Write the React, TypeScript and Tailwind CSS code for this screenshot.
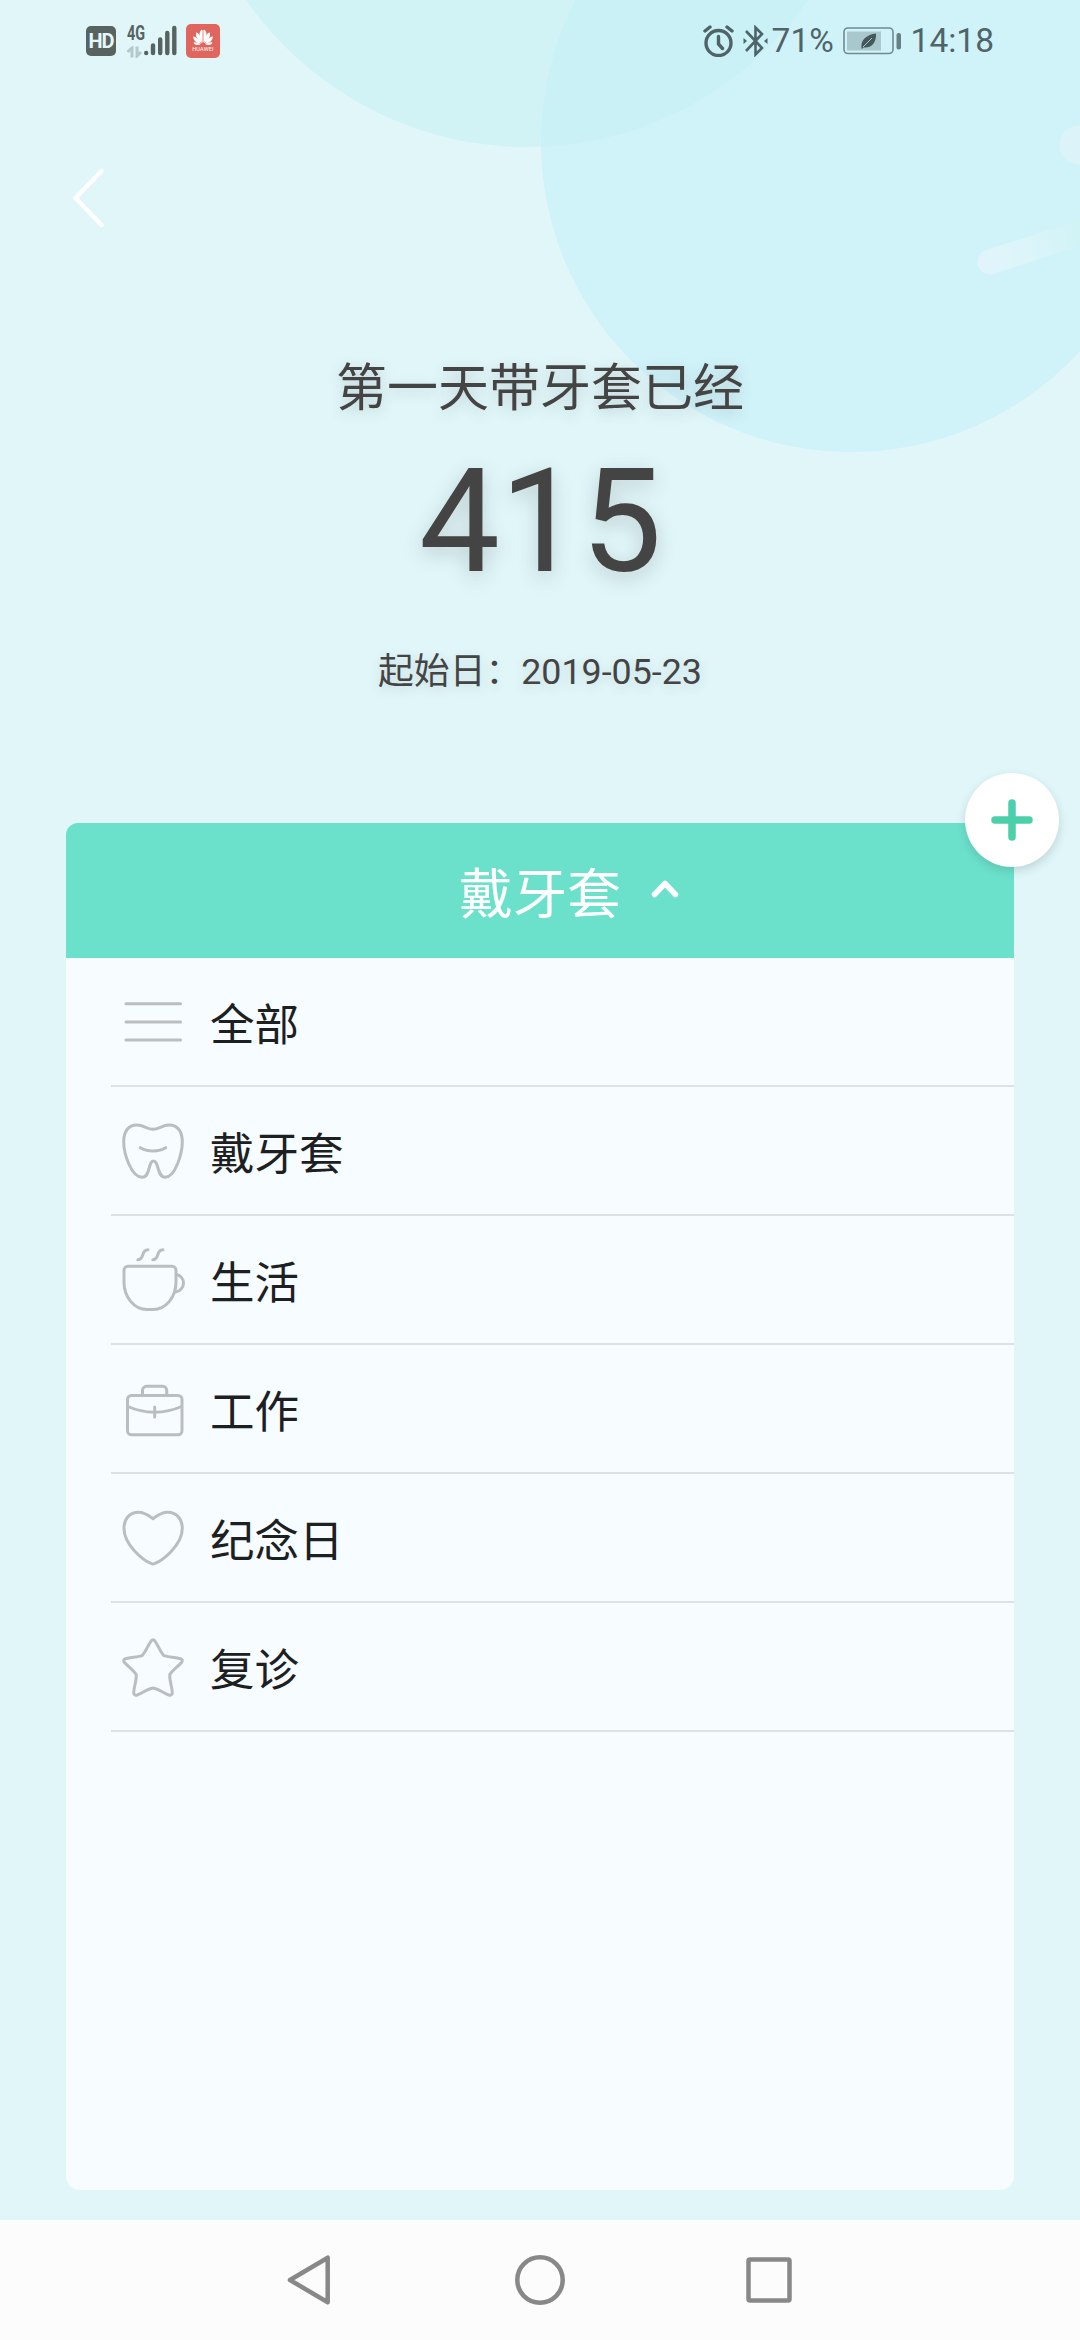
import { useState, type ReactNode } from 'react';

interface Category {
  id: string;
  name: string;
  icon: ReactNode;
}

const categories: Category[] = [
  {
    id: 'all',
    name: '全部',
    icon: <path d="M9 17.7H63.500M9 35.900H63.500M9 54H63.500" />,
  },
  {
    id: 'aligner',
    name: '戴牙套',
    icon: (
      <>
        <path d="M36 14.3C30 14.3 27 10 19.7 10C11.500 10 6.700 16.500 6.700 26.700C6.700 38 14 62.300 25.300 62.300C33.500 62.300 31 46 36.500 46C42 46 40 62.300 48 62.300C58.500 62.300 65.300 38 65.300 26.700C65.300 16.500 60.500 10 52.300 10C45 10 42 14.300 36 14.300Z" />
        <path d="M23.300 32.700C30 37 42 37 48.700 32.700" />
      </>
    ),
  },
  {
    id: 'life',
    name: '生活',
    icon: (
      <>
        <path d="M11 22.300H55A4 4 0 0 1 59 26.300V38C59 53 49 65.500 36 65.500H30C17 65.500 7 53 7 38V26.300A4 4 0 0 1 11 22.300Z" />
        <path d="M59.500 30.500C63.500 31.500 66.500 35 66.500 39C66.500 43.500 63 47.500 58.500 48" />
        <path d="M20.800 15.700C28 15.700 23.500 5.700 31 5.700M35.800 15.700C43 15.700 38.500 5.700 46 5.700" />
      </>
    ),
  },
  {
    id: 'work',
    name: '工作',
    icon: (
      <>
        <rect x="10.500" y="22.500" width="54.500" height="39.300" rx="4" />
        <path d="M25.500 22V17.300A4 4 0 0 1 29.500 13.300H45.700A4 4 0 0 1 49.700 17.300V22" />
        <path d="M11 33.500C27 41 48 41 64.500 33.500M37.700 34V44" />
      </>
    ),
  },
  {
    id: 'anniversary',
    name: '纪念日',
    icon: (
      <path d="M36 16.700C31.500 13.500 27.500 10.300 21.500 10.300C12.500 10.300 7 17 7 26.300C7 43 26 58.500 34.500 61.700Q36 62.300 37.500 61.700C46 58.500 65.300 43 65.300 26.300C65.300 17 59.500 10.300 50.500 10.300C44.500 10.300 40.500 13.500 36 16.700Z" />
    ),
  },
  {
    id: 'revisit',
    name: '复诊',
    icon: (
      <path d="M34.200 9.800Q36 7.600 37.800 9.800C41 14 43 20.500 46.500 24.300C51 26.300 58 26 63.500 27.700Q66.500 28.800 64.500 31.500C61 35.500 55.500 39 52.800 43.500C52.300 49.500 55 55.500 55.300 61.500Q55 65 51.800 64C46.500 62 41.500 58 36 57C30.500 58 25.500 62 20.200 64Q17 65 16.700 61.500C17 55.500 19.700 49.500 19.200 43.500C16.500 39 11 35.500 7.500 31.500Q5.500 28.800 8.500 27.700C14 26 21 26.300 25.500 24.300C29 20.500 31 14 34.200 9.800Z" />
    ),
  },
];

function Backdrop() {
  return (
    <svg className="absolute top-0 left-0 w-[1080px] h-[480px]" viewBox="0 0 1080 480">
      <defs>
        <linearGradient id="streak" gradientUnits="userSpaceOnUse" x1="990" y1="262" x2="1080" y2="233">
          <stop offset="0" stopColor="#e0f5fb" />
          <stop offset="0.4" stopColor="#dcf5f9" />
          <stop offset="1" stopColor="#d0f3f6" />
        </linearGradient>
      </defs>
      <circle cx="527" cy="-195" r="342" fill="#d2f3f5" />
      <circle cx="851" cy="142" r="310" fill="#d0f2f9" />
      <clipPath id="overlap">
        <circle cx="851" cy="142" r="310" />
      </clipPath>
      <circle cx="527" cy="-195" r="342" fill="#caf1f6" clipPath="url(#overlap)" />
      <path d="M990 262L1095 228" stroke="url(#streak)" strokeWidth="25" strokeLinecap="round" />
      <circle cx="1079" cy="145" r="19.500" fill="#dcf4f9" />
    </svg>
  );
}

function StatusBar() {
  return (
    <div className="relative flex h-[82px] items-center pl-[86px] pr-[86px] text-[#4f6469]">
      <div className="flex h-[30px] w-[30px] items-center justify-center rounded-[5px] bg-[#566361] text-[20px] font-bold leading-none tracking-[-1px] text-[#e6f7f9]">
        HD
      </div>
      <div className="ml-[11px] flex h-[34px] w-[16px] flex-col justify-between">
        <span className="origin-left scale-x-[0.72] text-[20px] font-bold leading-[18px] text-[#566361]">4G</span>
        <svg className="h-[12px] w-[15px]" viewBox="0 0 15 12" fill="none" stroke="#b5c9cc" strokeWidth="3">
          <path d="M5 11.500V2L0.500 6M10 0.500V10L14 6" />
        </svg>
      </div>
      <svg className="ml-[1px] h-[34px] w-[34px]" viewBox="0 0 34 34" stroke="#566361" strokeWidth="4.400" strokeLinecap="round">
        <path d="M2.200 29V29.100M9 21.500V29M16.200 15.500V29M23.300 9V29M30.300 4V29" />
      </svg>
      <div className="ml-[8px] flex h-[34px] w-[34px] flex-col items-center rounded-[5px] bg-[#e0655e] pt-[5px]">
        <svg className="h-[17px] w-[22px]" viewBox="0 0 22 17" fill="#fff">
          <path d="M10.600 14C7 9 6.500 3 9.500 0.800Q10.600 0.500 10.600 2Z" />
          <path d="M11.400 14C15 9 15.500 3 12.500 0.800Q11.400 0.500 11.400 2Z" />
          <path d="M9.800 14.300C5 11 3 6.500 4.500 3.200C7.500 4.500 9.500 9 9.800 14.300Z" />
          <path d="M12.200 14.300C17 11 19 6.500 17.500 3.200C14.500 4.500 12.500 9 12.200 14.300Z" />
          <path d="M9 14.800C4 14 1 11 1.200 7.200C4.500 8.200 7.500 11 9 14.800Z" />
          <path d="M13 14.800C18 14 21 11 20.800 7.200C17.500 8.200 14.500 11 13 14.800Z" />
          <path d="M8.500 15.500C5 16.500 2.500 16 1.500 13.500C4 13 6.500 14 8.500 15.500Z" />
          <path d="M13.500 15.500C17 16.500 19.500 16 20.500 13.500C18 13 15.500 14 13.500 15.500Z" />
        </svg>
        <span className="text-[5.500px] leading-[7px] tracking-[0.2px] text-white">HUAWEI</span>
      </div>

      <svg className="ml-auto h-[32px] w-[31px]" viewBox="0 0 31 32" fill="none" stroke="currentColor" strokeWidth="3.400" strokeLinecap="round">
        <circle cx="15.500" cy="18" r="12.500" />
        <path d="M15.500 11.500V19L19.500 23.500M2 6L7 2M29 6L24 2" />
      </svg>
      <svg className="ml-[9px] h-[32px] w-[25px]" viewBox="0 0 25 32" fill="none" stroke="currentColor" strokeWidth="2.600">
        <path d="M3 6L19 23L12.500 29.500V2.500L19 9L3 26" />
        <path d="M0.500 13L4 16L0.500 19ZM24.500 13L21 16L24.500 19Z" fill="currentColor" stroke="none" />
      </svg>
      <span className="ml-[4px] w-[62px] text-[33.500px] leading-[40px]">71%</span>
      <svg className="ml-[9px] h-[28px] w-[60px]" viewBox="0 0 60 28">
        <rect x="1" y="1" width="49" height="25.500" rx="4" fill="none" stroke="#6f8b90" strokeWidth="1.600" />
        <rect x="4" y="4.500" width="34" height="19" fill="#a9c8ce" />
        <path d="M18.500 20.500C17.500 13 24 7.500 33 6.500C33.500 15 29 21.500 20.500 20.500L18.800 22Z" fill="#44585b" />
        <path d="M20 20L29 11" stroke="#a9c8ce" strokeWidth="1" />
        <rect x="53.500" y="6" width="4.500" height="16.500" rx="2" fill="#6a7f83" />
      </svg>
      <span className="ml-[8px] text-[33.500px] leading-[40px]">14:18</span>
    </div>
  );
}

function NavBar() {
  return (
    <div className="flex h-[120px] items-center justify-between bg-[#fcfcfc] pl-[285px] pr-[285px]">
      <svg className="h-[54px] w-[50px]" viewBox="0 0 50 54" fill="none" stroke="#888" strokeWidth="4.500" strokeLinejoin="round">
        <path d="M5 27L42.700 4.700V49.300Z" />
      </svg>
      <svg className="h-[54px] w-[54px]" viewBox="0 0 54 54" fill="none" stroke="#888" strokeWidth="4.500">
        <circle cx="27" cy="27" r="22.700" />
      </svg>
      <svg className="h-[54px] w-[50px]" viewBox="0 0 50 54" fill="none" stroke="#888" strokeWidth="4.500">
        <rect x="3.500" y="6.500" width="41" height="41" rx="1.500" />
      </svg>
    </div>
  );
}

export default function App() {
  const [open, setOpen] = useState(true);

  return (
    <div className="relative flex h-[2340px] w-[1080px] flex-col overflow-hidden bg-[#e0f6f9] font-[Roboto,'Noto_Sans_CJK_SC',sans-serif]">
      <Backdrop />
      <StatusBar />

      <header className="relative flex h-[741px] flex-col items-center pt-[83px] text-[#444]">
        <button className="ml-[70px] self-start">
          <svg className="block h-[66px] w-[40px]" viewBox="0 0 40 66" fill="none" stroke="#fff" strokeWidth="4.500" strokeLinecap="round" strokeLinejoin="round">
            <path d="M31.500 6L5.500 33L31.500 60" />
          </svg>
        </button>
        <h1 className="mt-[123px] text-[51px] leading-[70px] [text-shadow:0_4px_14px_rgba(68,68,68,0.2)]">第一天带牙套已经</h1>
        <p className="mt-[13px] pl-[1px] text-[144px] leading-[170px] [text-shadow:0_6px_20px_rgba(68,68,68,0.22)]">415</p>
        <p className="mt-[40px] text-[35.800px] leading-[50px] [text-shadow:0_3px_12px_rgba(68,68,68,0.16)]">起始日：2019-05-23</p>
      </header>

      <main className="relative mx-[66px] mb-[30px] flex flex-1 flex-col rounded-[14px] bg-[#f6fcff]">
        <button
          className="flex h-[135px] items-center rounded-tl-[12px] bg-[#6be1cb] pl-[393px] text-[54px] text-white"
          onClick={() => setOpen(!open)}
        >
          <span className="pt-[10px]">戴牙套</span>
          <svg
            className={open ? 'ml-[28px] h-[24px] w-[32px]' : 'ml-[28px] h-[24px] w-[32px] rotate-180'}
            viewBox="0 0 32 24"
            fill="none"
            stroke="#fff"
            strokeWidth="5.500"
            strokeLinecap="round"
            strokeLinejoin="round"
          >
            <path d="M5.500 15.500L16 4.500L26.500 15.500" />
          </svg>
        </button>

        {open && (
          <ul className="pl-[45px]">
            {categories.map(category => (
              <li key={category.id} className="flex h-[129px] items-center border-b-2 border-[#dde2e6] pl-[6px] text-[#1d2021]">
                <svg className="h-[71px] w-[72px]" viewBox="0 0 72 71" fill="none" stroke="#bbbebf" strokeWidth="3" strokeLinecap="round" strokeLinejoin="round">
                  {category.icon}
                </svg>
                <span className="ml-[21px] pt-[8px] text-[44.500px] leading-[60px]">{category.name}</span>
              </li>
            ))}
          </ul>
        )}

        <button className="absolute -top-[50px] -right-[45px] flex h-[94px] w-[94px] items-center justify-center rounded-full bg-white shadow-[0_4px_10px_rgba(60,90,90,0.2)]">
          <svg className="h-[42px] w-[42px]" viewBox="0 0 42 42" stroke="#4cd0ac" strokeWidth="7.500" strokeLinecap="round">
            <path d="M4 21H38M21 4V38" />
          </svg>
        </button>
      </main>

      <NavBar />
    </div>
  );
}
